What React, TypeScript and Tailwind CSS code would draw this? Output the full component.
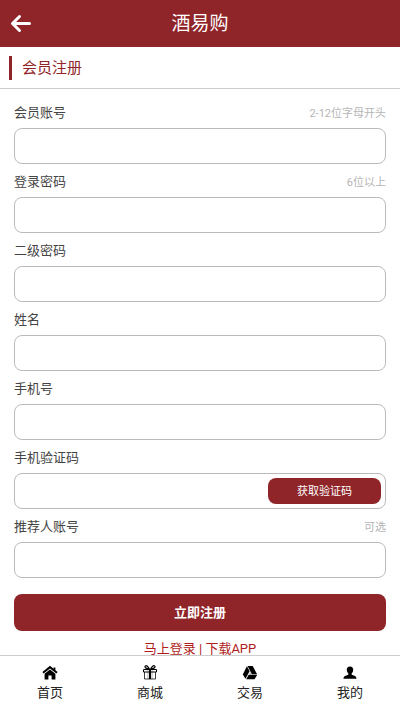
import React from 'react';
import clsx from 'clsx';

type FieldProps = {
  id: string;
  label: string;
  hint?: string;
  type?: string;
  action?: React.ReactNode;
};

const Field = ({ id, label, hint, type = 'text', action }: FieldProps) => (
  <div>
    <div className="flex h-[33px] items-center justify-between pt-0.5">
      <label htmlFor={id} className="text-[13px] leading-5 text-[#444]">
        {label}
      </label>
      {hint && (
        <span className="pt-0.5 text-[11px] leading-5 text-[#b5b5b5]">
          {hint}
        </span>
      )}
    </div>
    <div className="flex h-9 items-center rounded-lg border border-[#bbb] bg-white pr-1 focus-within:border-[#8f2429]">
      <input
        id={id}
        type={type}
        className="h-full min-w-0 flex-1 bg-transparent px-3 text-[13px] text-[#333] outline-none"
      />
      {action}
    </div>
  </div>
);

const HomeIcon = () => (
  <svg viewBox="0 0 16 16" className="h-4 w-4" fill="currentColor">
    <path d="M8 .8.4 7l1.200 1.500L8 3.400l6.400 5.100L15.600 7l-2.200-1.800V2.400h-1.800v1.400z" />
    <path d="M8 4.400 2.600 8.800v5.600h3.800v-4h3.200v4h3.800V8.800z" />
  </svg>
);

const GiftIcon = () => (
  <svg
    viewBox="0 0 16 16"
    className="h-4 w-4"
    fill="none"
    stroke="currentColor"
    strokeWidth="1"
  >
    <path d="M1.500 4.500h13v2.500h-13z" />
    <path d="M2.500 7v7h11V7" strokeOpacity="0.75" />
    <path d="M7 4.500h2V14H7z" fill="currentColor" stroke="none" />
    <path d="M6 4.500V14M10 4.500V14" strokeOpacity="0.3" />
    <path
      d="M7.500 4.300C6.300 1.300 4.300.1 3.400.9c-1.200 1 .2 2.700 4.100 3.400M8.500 4.300C9.700 1.300 11.700.1 12.600.9c1.200 1-.2 2.700-4.100 3.400"
      strokeWidth="1.200"
    />
  </svg>
);

const TradeIcon = () => (
  <svg viewBox="0 0 16 16" className="h-4 w-4" fill="currentColor">
    <path d="M4.900 1.300 7.600 6.200 3.500 13.800.8 9.400z" />
    <path d="M5.500 1h5.200l4.400 8.200h-5.200z" />
    <path d="M6.700 9.800h8.500l-2.600 4.400H4.200z" />
    <path d="M8.200 7.100 9.300 9.200H7z" fillOpacity="0.3" />
  </svg>
);

const UserIcon = () => (
  <svg viewBox="0 0 16 16" className="h-4 w-4" fill="currentColor">
    <path d="M8 1.500c2.200 0 3.300 1.300 3.200 3.400-.1 1.700-.7 2.800-1.500 3.400v1.400c2.600.9 4.700 1.300 4.900 4.100H1.400c.2-2.800 2.300-3.200 4.900-4.100V8.300C5.500 7.700 4.900 6.600 4.800 4.900 4.700 2.800 5.800 1.500 8 1.500z" />
  </svg>
);

const tabs = [
  { name: '首页', icon: HomeIcon },
  { name: '商城', icon: GiftIcon },
  { name: '交易', icon: TradeIcon },
  { name: '我的', icon: UserIcon }
];

const TabBar = () => (
  <nav className="grid h-14 shrink-0 grid-cols-4 border-t border-[#ccc] bg-white">
    {tabs.map(({ name, icon: Icon }) => (
      <a
        key={name}
        href="#"
        className="flex flex-col items-center gap-0.5 pt-[9px] text-[13px] leading-5 text-[#222]"
      >
        <span className="text-black">
          <Icon />
        </span>
        <span>{name}</span>
      </a>
    ))}
  </nav>
);

export default function App() {
  return (
    <div
      className={clsx(
        'flex h-dvh flex-col bg-white',
        "font-[Roboto,'Noto_Sans_CJK_SC',sans-serif]"
      )}
    >
      <header className="grid h-[47px] shrink-0 grid-cols-[40px_1fr_40px] items-center bg-[#8f2429] text-white">
        <button type="button" aria-label="返回" className="pl-[10px]">
          <svg
            viewBox="0 0 22 20"
            className="h-5 w-[22px]"
            fill="none"
            stroke="currentColor"
            strokeWidth="3"
            strokeLinecap="round"
            strokeLinejoin="round"
          >
            <path d="M9.500 2.500 2.500 9.500l7 7M3 9.500h16.500" />
          </svg>
        </button>
        <h1 className="text-center text-[19px] leading-7">酒易购</h1>
      </header>

      <main className="min-h-0 flex-1 overflow-y-auto [scrollbar-width:none]">
        <div className="flex h-[42px] items-center border-b border-[#ccc] pl-[9px]">
          <h2 className="border-l-3 border-[#8f2429] pt-px pl-[10px] text-[15px] leading-[23px] text-[#8f2429]">
            会员注册
          </h2>
        </div>

        <form
          className="px-[14px] pt-[6px]"
          onSubmit={(e) => e.preventDefault()}
        >
          <Field id="account" label="会员账号" hint="2-12位字母开头" />
          <Field
            id="password"
            label="登录密码"
            hint="6位以上"
            type="password"
          />
          <Field id="password2" label="二级密码" type="password" />
          <Field id="name" label="姓名" />
          <Field id="phone" label="手机号" type="tel" />
          <Field
            id="code"
            label="手机验证码"
            action={
              <button
                type="button"
                className="h-[26px] w-[113px] rounded-lg bg-[#8f2429] pt-0.5 text-[11px] text-white"
              >
                获取验证码
              </button>
            }
          />
          <Field id="referrer" label="推荐人账号" hint="可选" />

          <button
            type="submit"
            className="mt-4 h-[37px] w-full rounded-lg bg-[#8f2429] text-[13px] font-bold text-white"
          >
            立即注册
          </button>
        </form>

        <p className="pt-2 pb-4 text-center text-[13px] leading-5 text-[#b01c1c]">
          <a href="#">马上登录</a> | <a href="#">下载APP</a>
        </p>
      </main>

      <TabBar />
    </div>
  );
}
